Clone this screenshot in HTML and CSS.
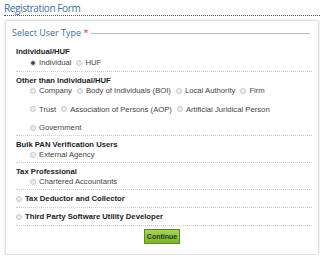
FILE: index.html
```html
<!DOCTYPE html>
<html lang="en">
<head>
  <meta charset="UTF-8" />
  <title>Registration Form</title>
  <link rel="stylesheet" href="styles.css">
</head>
<body>
  <h1 class="page-title">Registration Form</h1>

  <div class="panel">
    <div class="legend">
      <span>Select User Type <span class="req">*</span></span>
      <span class="legend-line"></span>
    </div>

    <div class="group first">
      <h2>Individual/HUF</h2>
      <div class="opts">
        <label><input type="radio" name="ut" checked> Individual</label>
        <label><input type="radio" name="ut"> HUF</label>
      </div>
    </div>

    <div class="group">
      <h2>Other than Individual/HUF</h2>
      <div class="rows">
        <div class="opts">
          <label><input type="radio" name="ut"> Company</label>
          <label><input type="radio" name="ut"> Body of Individuals (BOI)</label>
          <label><input type="radio" name="ut"> Local Authority</label>
          <label><input type="radio" name="ut"> Firm</label>
        </div>
        <div class="opts">
          <label><input type="radio" name="ut"> Trust</label>
          <label><input type="radio" name="ut"> Association of Persons (AOP)</label>
          <label><input type="radio" name="ut"> Artificial Juridical Person</label>
        </div>
        <div class="opts">
          <label><input type="radio" name="ut"> Government</label>
        </div>
      </div>
    </div>

    <div class="group">
      <h2>Bulk PAN Verification Users</h2>
      <div class="opts">
        <label><input type="radio" name="ut"> External Agency</label>
      </div>
    </div>

    <div class="group">
      <h2>Tax Professional</h2>
      <div class="opts">
        <label><input type="radio" name="ut"> Chartered Accountants</label>
      </div>
    </div>

    <div class="group single">
      <label class="bold"><input type="radio" name="ut"> Tax Deductor and Collector</label>
    </div>

    <div class="group single">
      <label class="bold"><input type="radio" name="ut"> Third Party Software Utility Developer</label>
    </div>

    <div class="actions">
      <button>Continue</button>
    </div>
  </div>
</body>
</html>
```

FILE: styles.css
```css
body {
  margin: 0;
  padding: 2px 3px 0 4px;
  font-family: "Liberation Sans", Arial, sans-serif;
  font-size: 7.7px;
  color: #333;
  background: #fff;
}

.page-title {
  margin: 0;
  font-family: "Open Sans", sans-serif;
  font-weight: normal;
  font-size: 10px;
  letter-spacing: -0.4px;
  color: #3a6ea5;
  line-height: 13px;
  border-bottom: 1px dotted #555;
}

.panel {
  margin: 4px 1px 0 1px;
  border: 1px solid #e2e2e2;
  box-shadow: 0 0 2px #ccc;
  border-radius: 2px;
  padding: 4px 6px 10px 6px;
}

.legend {
  display: flex;
  align-items: center;
  font-family: "Open Sans", sans-serif;
  font-size: 9px;
  color: #3a6ea5;
  height: 14px;
}

.req {
  color: #d33;
}

.legend-line {
  flex: 1;
  margin-left: 3px;
  margin-right: 2px;
  margin-top: 3px;
  border-top: 1px solid #bbb;
}

.group {
  margin-left: 4px;
  padding: 4px 0 3px 0;
  border-bottom: 1px dotted #ccc;
}

.group.first {
  padding-top: 8px;
  padding-bottom: 4px;
}

.group.first .opts {
  margin-top: 1px;
}

h2 {
  margin: 0;
  font-size: 7.7px;
  font-weight: bold;
  color: #222;
  line-height: 10px;
}

.rows {
  display: flex;
  flex-direction: column;
  row-gap: 9.5px;
}

.opts {
  display: flex;
  padding-left: 14px;
  column-gap: 5px;
}

label {
  display: flex;
  align-items: center;
  line-height: 9px;
  color: #444;
}

label.bold {
  font-weight: bold;
  color: #222;
  line-height: 10px;
}

.single {
  padding: 4px 0 3px 0;
}

input[type="radio"] {
  appearance: none;
  width: 6px;
  height: 6px;
  margin: 0 3px 0 0;
  border: 1px solid #c8c8c8;
  border-radius: 50%;
  background: #eee;
  box-sizing: border-box;
}

input[type="radio"]:checked {
  background: radial-gradient(circle, #444 0 1.5px, #ddd 2px);
}

.actions {
  display: flex;
  justify-content: center;
  padding-top: 3px;
}

button {
  font-family: "Liberation Sans", Arial, sans-serif;
  font-size: 7px;
  font-weight: bold;
  color: #1f3a08;
  background: linear-gradient(#a6d35a, #7cb231);
  border: 1px solid #5c8a1e;
  padding: 3px 2px;
  cursor: pointer;
}
```
